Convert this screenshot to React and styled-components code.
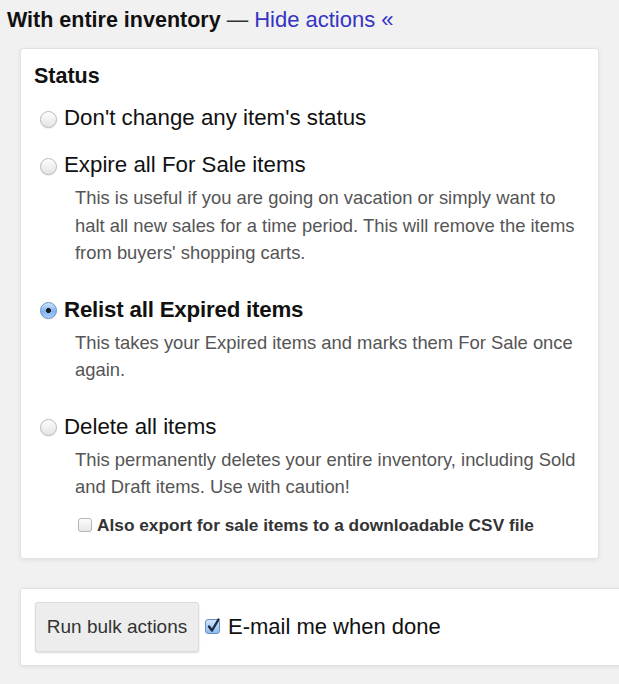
import React from "react";
import { styled, createGlobalStyle } from "styled-components";

const Global = createGlobalStyle`
  html, body {
    margin: 0;
    padding: 0;
    background: #f1f1f1;
    font-family: "Liberation Sans", Arial, Helvetica, sans-serif;
    color: #111;
  }
`;

const Page = styled.div`
  padding: 8px 0 20px 0;
  overflow: hidden;
`;

const Heading = styled.div`
  padding-left: 7px;
  font-size: 21.5px;
  line-height: 24px;
  font-weight: bold;
  color: #111;
  white-space: nowrap;
  a {
    font-weight: normal;
    color: #3535c2;
    text-decoration: none;
    font-size: 22px;
  }
`;

const Dash = styled.span`
  font-weight: normal;
  color: #333;
  margin: 0 6px;
`;

const Card = styled.div`
  background: #fff;
  border: 1px solid #e2e2e2;
  border-radius: 3px;
  box-shadow: 0 1px 4px rgba(0, 0, 0, 0.08);
  padding: ${(p) => p.$pad || "15px 14px 21px 13px"};
  margin-left: 20px;
  margin-right: ${(p) => (p.$bleed ? "-20px" : "20px")};
  margin-top: ${(p) => p.$top || "16px"};
`;

const Title = styled.div`
  font-size: 21.5px;
  line-height: 24px;
  font-weight: bold;
  margin-bottom: -4px;
`;

const Option = styled.div`
  display: flex;
  flex-direction: column;
  margin-top: 21px;
  padding-left: 6px;
`;

const OptionRow = styled.label`
  display: flex;
  align-items: center;
  font-size: 22.3px;
  line-height: 26px;
  font-weight: ${(p) => (p.$bold ? "bold" : "normal")};
  color: #111;
  letter-spacing: ${(p) => (p.$bold ? "-0.2px" : "0")};
`;

const Radio = styled.span`
  flex: none;
  width: 17px;
  height: 17px;
  border-radius: 50%;
  margin: 2px 7px 0 0;
  box-sizing: border-box;
  border: 1px solid ${(p) => (p.$on ? "#6d8fc4" : "#b9b9b9")};
  background: ${(p) =>
    p.$on
      ? "radial-gradient(circle at 50% 50%, #1a1a1a 0 2.2px, transparent 2.8px), linear-gradient(#cfe4fb, #7fb3ef 55%, #a9d0fb)"
      : "linear-gradient(#fdfdfd, #e4e4e4)"};
  box-shadow: 0 1px 1px rgba(0, 0, 0, 0.08);
`;

const Desc = styled.p`
  margin: 6px 0 9px 35px;
  font-size: 18.4px;
  line-height: 27.5px;
  color: #555;
`;

const SubCheck = styled.label`
  display: flex;
  align-items: center;
  margin: 3px 0 0 38px;
  font-size: 17.3px;
  line-height: 24px;
  font-weight: bold;
  color: #333;
  white-space: nowrap;
`;

const Box = styled.span`
  flex: none;
  width: 14px;
  height: 14px;
  border-radius: 3px;
  box-sizing: border-box;
  border: 1px solid ${(p) => (p.$on ? "#6d8fc4" : "#b5b5b5")};
  background: ${(p) =>
    p.$on ? "linear-gradient(#cfe4fb, #8dbcf2)" : "linear-gradient(#fdfdfd, #e6e6e6)"};
  margin-right: 5px;
  position: relative;
  svg {
    position: absolute;
    left: 0px;
    top: -3px;
  }
`;

const Actions = styled.div`
  display: flex;
  align-items: center;
`;

const Button = styled.button`
  font-family: inherit;
  font-size: 19px;
  color: #333;
  height: 50px;
  width: 164px;
  padding: 0;
  background: #ededed;
  border: 1px solid #dcdcdc;
  border-radius: 3px;
  box-shadow: 0 1px 2px rgba(0, 0, 0, 0.15);
  margin-right: 6px;
`;

const Mail = styled.label`
  display: flex;
  align-items: center;
  font-size: 22px;
  color: #111;
  ${Box} {
    width: 15px;
    height: 15px;
    margin-right: 8px;
  }
`;

function Check({ on }) {
  return (
    <Box $on={on}>
      {on && (
        <svg width="15" height="17" viewBox="0 0 15 17">
          <path d="M3 9.5 L6 13.5 L12.5 2.5" fill="none" stroke="#1b2a44" strokeWidth="2.4" strokeLinecap="round" strokeLinejoin="round" />
        </svg>
      )}
    </Box>
  );
}

const options = [
  { label: "Don't change any item's status" },
  {
    label: "Expire all For Sale items",
    desc: "This is useful if you are going on vacation or simply want to halt all new sales for a time period. This will remove the items from buyers' shopping carts.",
  },
  {
    label: "Relist all Expired items",
    desc: "This takes your Expired items and marks them For Sale once again.",
    on: true,
  },
  {
    label: "Delete all items",
    desc: "This permanently deletes your entire inventory, including Sold and Draft items. Use with caution!",
    extra: true,
  },
];

export default function App() {
  return (
    <Page>
      <Global />
      <Heading>
        With entire inventory<Dash>—</Dash>
        <a href="#">Hide actions «</a>
      </Heading>
      <Card>
        <Title>Status</Title>
        {options.map((o) => (
          <Option key={o.label}>
            <OptionRow $bold={o.on}>
              <Radio $on={o.on} />
              {o.label}
            </OptionRow>
            {o.desc && <Desc>{o.desc}</Desc>}
            {o.extra && (
              <SubCheck>
                <Check />
                Also export for sale items to a downloadable CSV file
              </SubCheck>
            )}
          </Option>
        ))}
      </Card>
      <Card $bleed $top="29px" $pad="13px 14px">
        <Actions>
          <Button>Run bulk actions</Button>
          <Mail>
            <Check on />
            E-mail me when done
          </Mail>
        </Actions>
      </Card>
    </Page>
  );
}
